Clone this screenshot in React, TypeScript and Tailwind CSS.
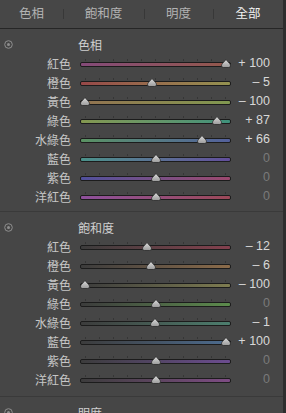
import React from 'react';

interface Slider {
  label: string;
  value: number;
  track: string;
}

const hueRows: Slider[] = [
  { label: '紅色', value: 100, track: 'from-[#844a78] to-[#94584a]' },
  { label: '橙色', value: -5, track: 'from-[#964848] to-[#949250]' },
  { label: '黃色', value: -100, track: 'from-[#927250] to-[#809850]' },
  { label: '綠色', value: 87, track: 'from-[#849850] to-[#3e927c]' },
  { label: '水綠色', value: 66, track: 'from-[#5a9262] to-[#54609c]' },
  { label: '藍色', value: 0, track: 'from-[#4a928a] to-[#624e9c]' },
  { label: '紫色', value: 0, track: 'from-[#50509c] to-[#9c486e]' },
  { label: '洋紅色', value: 0, track: 'from-[#8e509c] to-[#9c4858]' },
];

const satRows: Slider[] = [
  { label: '紅色', value: -12, track: 'from-[#3c3c3c] to-[#84404e]' },
  { label: '橙色', value: -6, track: 'from-[#3c3c3c] to-[#8c6c4a]' },
  { label: '黃色', value: -100, track: 'from-[#3c3c3c] to-[#7e7c50]' },
  { label: '綠色', value: 0, track: 'from-[#3c3c3c] to-[#5c8c4c]' },
  { label: '水綠色', value: -1, track: 'from-[#3c3c3c] to-[#4c7e6e]' },
  { label: '藍色', value: 100, track: 'from-[#3c3c3c] to-[#4c6c90]' },
  { label: '紫色', value: 0, track: 'from-[#3c3c3c] to-[#6c4c90]' },
  { label: '洋紅色', value: 0, track: 'from-[#3c3c3c] to-[#7e4c84]' },
];

const formatValue = (v: number) => {
  if (v > 0) return `+ ${v}`;
  if (v < 0) return `– ${Math.abs(v)}`;
  return '0';
};

const Thumb: React.FC<{ value: number }> = ({ value }) => {
  const center = 5 + ((value + 100) / 200) * 141;
  return (
    <svg
      width="10"
      height="9"
      viewBox="0 0 10 9"
      className="absolute top-[5px]"
      style={{ left: center - 5 }}
    >
      <defs>
        <linearGradient id="thumbFill" x1="0" y1="0" x2="0" y2="1">
          <stop offset="0" stopColor="#dcdcdc" />
          <stop offset="1" stopColor="#9a9a9a" />
        </linearGradient>
      </defs>
      <path
        d="M5 0.5 L8.6 4.6 Q9.5 5.6 9.5 6.8 Q9.5 8.5 7.8 8.5 L2.2 8.5 Q0.5 8.5 0.5 6.8 Q0.5 5.6 1.4 4.6 Z"
        fill="url(#thumbFill)"
        stroke="#2a2a2a"
        strokeWidth="0.8"
      />
    </svg>
  );
};

const SliderRow: React.FC<{ row: Slider }> = ({ row }) => (
  <div className="flex items-center h-[19px]">
    <div className="w-[71px] text-right text-[12px] text-[#c6c6c6] leading-none">{row.label}</div>
    <div className="relative ml-[9px] w-[151px] h-[19px]">
      <div className="absolute left-[5px] right-[5px] top-[5px] flex justify-between">
        {Array.from({ length: 11 }).map((_, i) => (
          <div key={i} className="w-px h-[2px] bg-[#363636]" />
        ))}
      </div>
      <div className="absolute left-0 right-0 top-[8px] h-[5px] rounded-[2px] border border-[#1c1c1c] bg-[#1c1c1c]">
        <div className={`h-full rounded-[1px] bg-linear-to-r ${row.track}`} />
      </div>
      <Thumb value={row.value} />
    </div>
    <div
      className={`w-[39px] text-right text-[12.5px] leading-none font-['Liberation_Sans',sans-serif] ${
        row.value === 0 ? 'text-[#7a7a7a]' : 'text-[#d8d8d8]'
      }`}
    >
      {formatValue(row.value)}
    </div>
  </div>
);

const SectionIcon: React.FC = () => (
  <svg width="9" height="9" viewBox="0 0 9 9" className="absolute left-[4px] top-[5px]">
    <circle cx="4.5" cy="4.5" r="3.8" fill="none" stroke="#8e8e8e" strokeWidth="1" />
    <circle cx="4.5" cy="4.5" r="1.5" fill="#8e8e8e" />
  </svg>
);

const Section: React.FC<{ title: string; rows: Slider[]; className?: string }> = ({
  title,
  rows,
  className,
}) => (
  <div className={`pt-[6px] ${className ?? ''}`}>
    <div className="relative h-[19px] flex items-center">
      <SectionIcon />
      <div className="ml-[78px] text-[12px] text-[#d0d0d0] leading-none">{title}</div>
    </div>
    {rows.map((r) => (
      <SliderRow key={r.label} row={r} />
    ))}
  </div>
);

const tabs = [
  { name: '色相', w: 'w-[63px]' },
  { name: '飽和度', w: 'w-[81px]' },
  { name: '明度', w: 'w-[69px]' },
  { name: '全部', w: 'flex-1' },
];

export default function App() {
  return (
    <div
      className="w-[286px] h-[413px] overflow-hidden flex bg-[#2e2e2e]"
      style={{ fontFamily: '"Noto Sans CJK TC", "Noto Sans", sans-serif' }}
    >
      <div className="w-[283px] h-full bg-[#464646]">
        <div className="h-[29px] flex border-b border-[#262626] bg-[#474747]">
          {tabs.map((t, i) => (
            <div key={t.name} className={`${t.w} relative flex items-center justify-center h-full`}>
              {i > 0 && <div className="absolute left-0 top-[9px] w-px h-[10px] bg-[#383838]" />}
              <span
                className={`text-[12.5px] leading-none -mt-[2px] ${
                  t.name === '全部' ? 'text-[#f2f2f2]' : 'text-[#b2b2b2]'
                }`}
              >
                {t.name}
              </span>
            </div>
          ))}
        </div>
        <Section title="色相" rows={hueRows} className="pb-[5px] border-b border-[#3a3a3a]" />
        <Section title="飽和度" rows={satRows} className="pb-[7px] border-b border-[#3a3a3a]" />
        <Section title="明度" rows={[]} />
      </div>
    </div>
  );
}
